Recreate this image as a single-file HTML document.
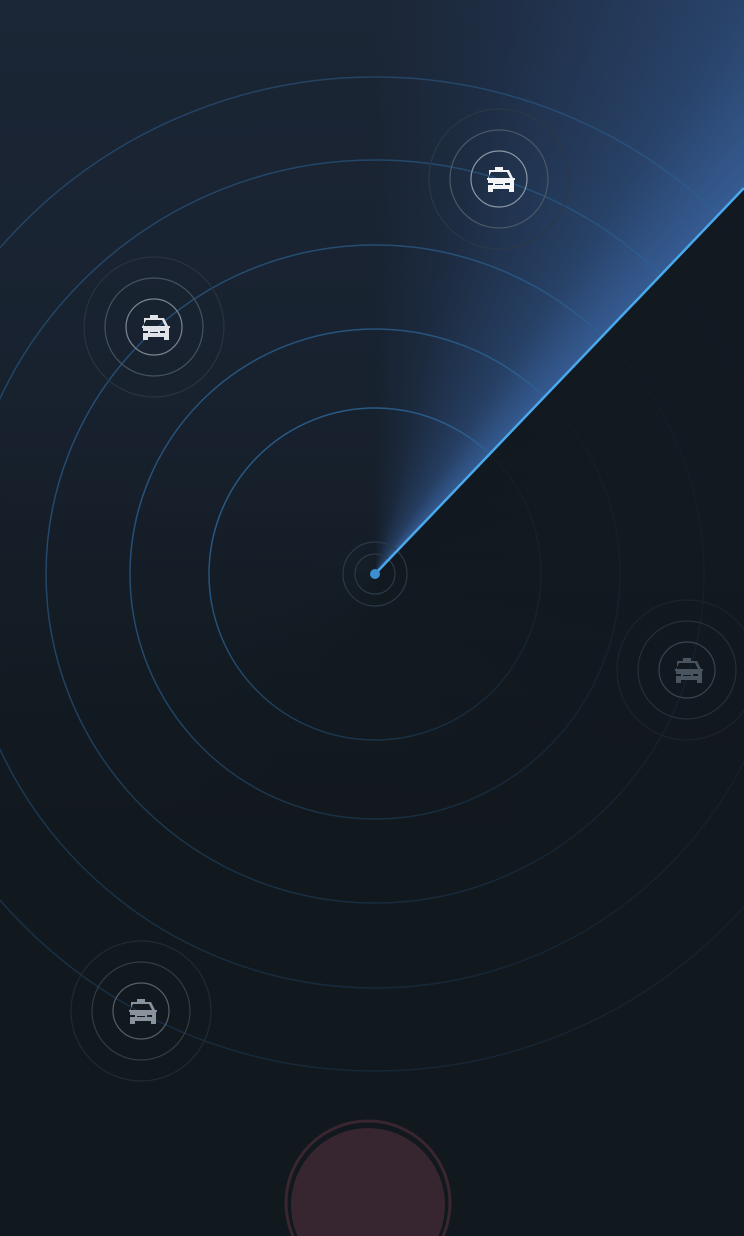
<!DOCTYPE html>
<html><head><style>
html,body{margin:0;padding:0;}
body{width:744px;height:1236px;overflow:hidden;position:relative;background:#11181e;font-family:"Liberation Sans",sans-serif;}
.bg{position:absolute;inset:0;background:linear-gradient(180deg,#1b2636 0%,#18222f 30%,#141c25 50%,#11181e 68%,#11181e 100%);}
.sweep{position:absolute;inset:0;background:conic-gradient(from 0deg at 375px 574px,rgba(60,110,190,0) 0deg,rgba(60,110,190,0.12) 14deg,rgba(65,118,198,0.35) 32deg,rgba(72,128,210,0.6) 43.6deg,rgba(72,128,210,0) 43.7deg,rgba(72,128,210,0) 360deg);}
.dark{position:absolute;inset:0;background:conic-gradient(from 0deg at 375px 574px,rgba(17,24,30,0) 0deg,rgba(17,24,30,0) 43.7deg,rgba(17,24,30,0.93) 43.8deg,rgba(17,24,30,0.82) 120deg,rgba(17,24,30,0.5) 200deg,rgba(17,24,30,0.15) 250deg,rgba(17,24,30,0) 290deg,rgba(17,24,30,0) 360deg);}
svg{position:absolute;left:0;top:0;}
</style></head><body>
<div class="bg"></div>
<div class="sweep"></div>
<svg width="744" height="1236" viewBox="0 0 744 1236">
<g fill="none" stroke="#2c6495" stroke-width="1.5">
<circle cx="375" cy="574" r="166" stroke-opacity="0.85"/>
<circle cx="375" cy="574" r="245" stroke-opacity="0.75"/>
<circle cx="375" cy="574" r="329" stroke-opacity="0.65"/>
<circle cx="375" cy="574" r="414" stroke-opacity="0.55"/>
<circle cx="375" cy="574" r="497" stroke-opacity="0.5"/>
</g>
</svg>
<div class="dark"></div>
<svg width="744" height="1236" viewBox="0 0 744 1236">
<defs>
<g id="taxi">
<path d="M-4,-14 h8 v3 h-8z"/>
<path d="M-10,-11 h20 l4,8 h2 v2 h-1 v12 h-5 v-3 h-16 v3 h-5 v-12 h-1 v-2 h2z M-8,-9 l-3,6 h22 l-3,-6z M-11,2 h5 v2 h-5z M6,2 h5 v2 h-5z M-4,3 h8 v1 h-8z" fill-rule="evenodd"/>
</g>
</defs>
<g fill="none" stroke="#2a3a48" stroke-width="1.2">
<circle cx="375" cy="574" r="20"/><circle cx="375" cy="574" r="32"/>
</g>
<line x1="375" y1="574" x2="744" y2="188" stroke="#4aa8ec" stroke-width="2.5"/>
<circle cx="375" cy="574" r="5" fill="#3a8fd0"/>
<g fill="none" stroke-width="1.2">
<circle cx="499" cy="179" r="28" stroke="#8a96a3"/>
<circle cx="499" cy="179" r="49" stroke="#4a5866"/>
<circle cx="499" cy="179" r="70" stroke="#2c3846"/>
<circle cx="154" cy="327" r="28" stroke="#7a8591"/>
<circle cx="154" cy="327" r="49" stroke="#445260"/>
<circle cx="154" cy="327" r="70" stroke="#29343f"/>
<circle cx="687" cy="670" r="28" stroke="#3a444e"/>
<circle cx="687" cy="670" r="49" stroke="#263038"/>
<circle cx="687" cy="670" r="70" stroke="#1c242b"/>
<circle cx="141" cy="1011" r="28" stroke="#55606a"/>
<circle cx="141" cy="1011" r="49" stroke="#333c45"/>
<circle cx="141" cy="1011" r="70" stroke="#222a32"/>
</g>
<use href="#taxi" x="499" y="181" fill="#f2f4f6"/>
<use href="#taxi" x="154" y="329" fill="#dfe3e7"/>
<use href="#taxi" x="687" y="672" fill="#4a545e"/>
<use href="#taxi" x="141" y="1013" fill="#8a939c"/>
<circle cx="368" cy="1203" r="82" fill="none" stroke="#3a2630" stroke-width="3"/>
<circle cx="368" cy="1205" r="77" fill="#37262f"/>
</svg>
</body></html>
